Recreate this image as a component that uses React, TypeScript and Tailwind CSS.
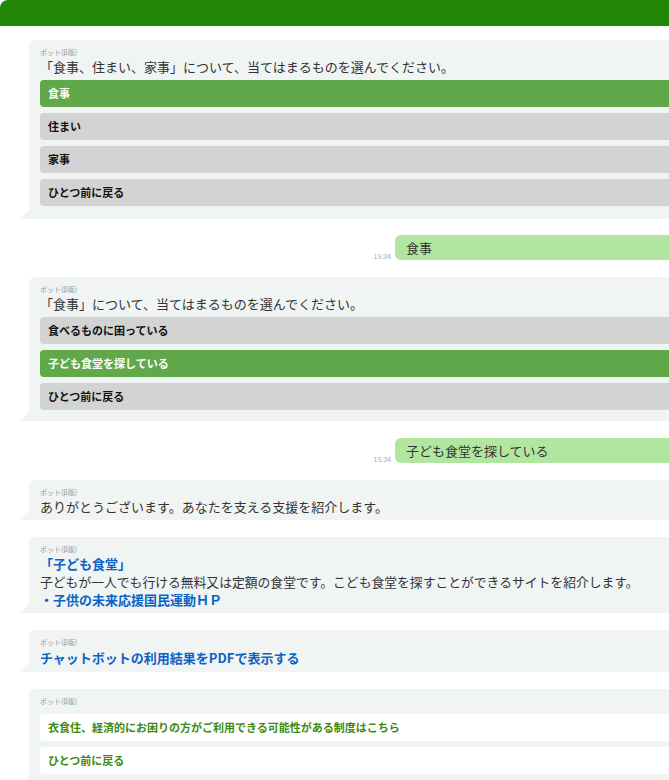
import { ReactNode } from "react";

const LABEL = "ボット(β版)";

function Tail() {
  // little speech tail at the bottom-left corner of a bot bubble
  return (
    <svg className="absolute left-[-10px] bottom-0" width="11" height="9" viewBox="0 0 11 9">
      <polygon points="11,0 11,9 0,9" fill="#f0f4f3" />
    </svg>
  );
}

function BotBubble({ children, pb = "pb-[5px]" }: { children: ReactNode; pb?: string }) {
  return (
    <div className={`relative w-[660px] rounded-t-[6px] rounded-br-[6px] bg-[#f0f4f3] pl-[11px] pt-[6px] ${pb}`}>
      <div className="text-[7px] leading-[12px] text-[#999]">{LABEL}</div>
      {children}
      <Tail />
    </div>
  );
}

function Choice({ label, active = false }: { label: string; active?: boolean }) {
  return (
    <div
      className={`flex h-[27px] items-center rounded-[4px] pl-[8px] text-[11px] font-bold ${
        active ? "bg-[#61a84b] text-white" : "bg-[#d3d3d3] text-[#111]"
      }`}
    >
      {label}
    </div>
  );
}

function UserBubble({ text, tight = false }: { text: string; tight?: boolean }) {
  return (
    <div className={`flex items-end justify-end gap-[4px] ${tight ? "-mt-[1px]" : ""}`}>
      <span className="mb-[-1px] text-[7px] text-[#aaa]">15:34</span>
      <div className="flex h-[25px] w-[274px] items-center rounded-l-[6px] bg-[#b1e6a0] pl-[11px] text-[13px] text-[#333]">
        {text}
      </div>
    </div>
  );
}

export default function App() {
  return (
    <div className="min-h-screen w-[669px] overflow-hidden bg-white font-['Noto_Sans_CJK_JP','Noto_Sans',sans-serif]">
      <div className="h-[26px] rounded-tl-[8px] bg-[#218505]" />

      <div className="flex flex-col gap-[17px] pl-[29px] pt-[14px]">
        <BotBubble pb="pb-[13px]">
          <p className="text-[13px] leading-[18px] text-[#333]">「食事、住まい、家事」について、当てはまるものを選んでください。</p>
          <div className="mt-[4px] flex flex-col gap-[6px]">
            <Choice label="食事" active />
            <Choice label="住まい" />
            <Choice label="家事" />
            <Choice label="ひとつ前に戻る" />
          </div>
        </BotBubble>

        <UserBubble text="食事" tight />

        <BotBubble pb="pb-[11px]">
          <p className="text-[13px] leading-[18px] text-[#333]">「食事」について、当てはまるものを選んでください。</p>
          <div className="mt-[4px] flex flex-col gap-[6px]">
            <Choice label="食べるものに困っている" />
            <Choice label="子ども食堂を探している" active />
            <Choice label="ひとつ前に戻る" />
          </div>
        </BotBubble>

        <UserBubble text="子ども食堂を探している" />

        <BotBubble pb="pb-[4px]">
          <p className="text-[13px] leading-[18px] text-[#333]">ありがとうございます。あなたを支える支援を紹介します。</p>
        </BotBubble>

        <BotBubble pb="pb-[4px]">
          <p className="text-[13px] font-bold leading-[18px] text-[#0b63c5]">「子ども食堂」</p>
          <p className="text-[12.8px] leading-[18px] text-[#333]">
            子どもが一人でも行ける無料又は定額の食堂です。こども食堂を探すことができるサイトを紹介します。
          </p>
          <p className="text-[13px] font-bold leading-[18px] text-[#0b63c5]">・子供の未来応援国民運動ＨＰ</p>
        </BotBubble>

        <BotBubble pb="pb-[4px]">
          <p className="text-[13px] font-bold leading-[20px] text-[#0b63c5]">チャットボットの利用結果をPDFで表示する</p>
        </BotBubble>

        <BotBubble pb="pb-[12px]">
          <div className="mt-[7px] flex flex-col gap-[6px]">
            <div className="flex h-[27px] items-center rounded-[4px] bg-white pl-[8px] text-[11px] font-bold text-[#3c8a0e]">
              衣食住、経済的にお困りの方がご利用できる可能性がある制度はこちら
            </div>
            <div className="flex h-[27px] items-center rounded-[4px] bg-white pl-[8px] text-[11px] font-bold text-[#3c8a0e]">
              ひとつ前に戻る
            </div>
          </div>
        </BotBubble>
      </div>
    </div>
  );
}
